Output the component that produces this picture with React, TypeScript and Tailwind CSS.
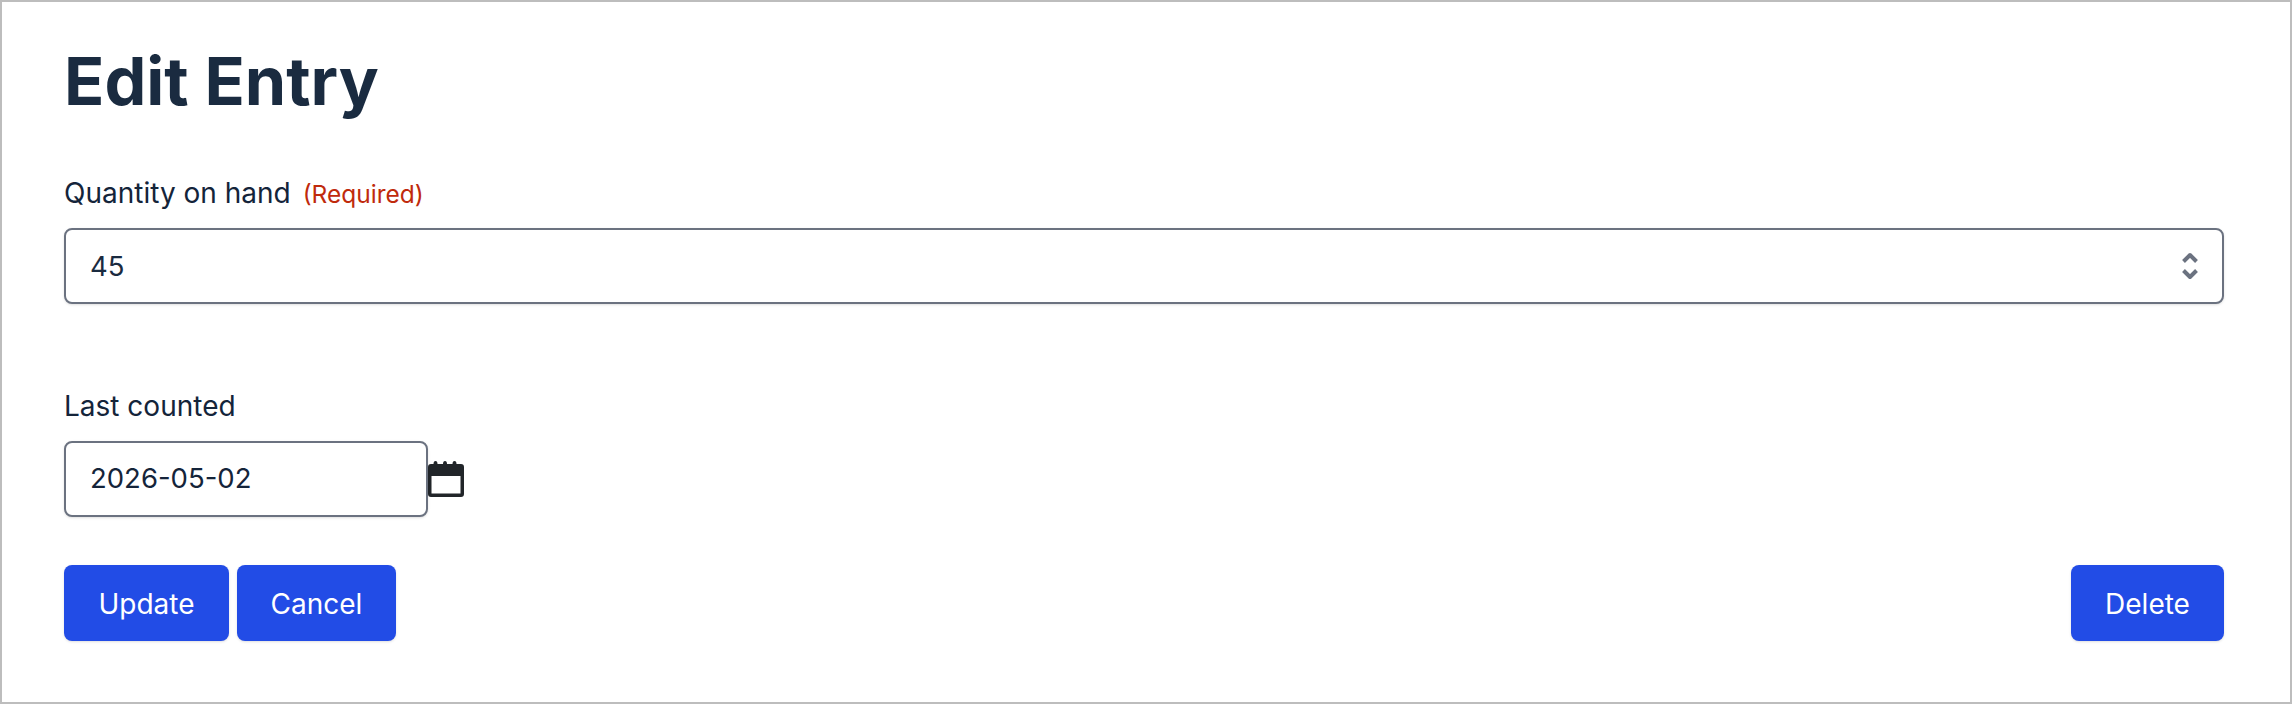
const FONT = "font-['Inter',sans-serif]";

function CalendarIcon() {
  return (
    <svg width="36" height="36" viewBox="0 0 36 36" className="shrink-0" aria-hidden="true">
      <path
        fill="#212529"
        fillRule="evenodd"
        d="M3 3h2.500a2 3 0 0 1 4 0h5.500a2 3 0 0 1 4 0h5.500a2 3 0 0 1 4 0H33a3 3 0 0 1 3 3v27a3 3 0 0 1-3 3H3a3 3 0 0 1-3-3V6a3 3 0 0 1 3-3zM3.500 15v17.500h29V15z"
      />
    </svg>
  );
}

function StepperIcon() {
  return (
    <svg width="16" height="28" viewBox="0 0 16 28" fill="none" stroke="#6b7280" strokeWidth="4" aria-hidden="true">
      <path d="M1.500 9.500L8 3l6.500 6.500" strokeLinejoin="round" />
      <path d="M1.500 18.500L8 25l6.500-6.500" strokeLinejoin="round" />
    </svg>
  );
}

function Action({ label, className }: { label: string; className: string }) {
  return (
    <button className={`h-[76px] rounded-lg bg-[#224ce6] pt-[2px] text-[28px] leading-none text-white shadow-sm ${className}`}>
      {label}
    </button>
  );
}

export default function App() {
  return (
    <div className={`${FONT} h-[704px] w-[2292px] border-2 border-[#bdbdbd] bg-white pl-[62px] pr-[66px] text-[#1a2b40]`}>
      <h1 className="pt-[37px] text-[66.500px] font-bold leading-[84px] text-[#1a2b40]">Edit Entry</h1>

      <div className="mt-[52px] flex items-baseline text-[28px] leading-[36px]">
        <span className="text-[#14243a]">Quantity on hand</span>
        <span className="ml-[12px] text-[24.500px] text-[#c02a0c]">(Required)</span>
      </div>
      <div className="mt-[16px] flex h-[76px] items-center justify-between rounded-lg border-2 border-[#6b7280] bg-white px-[24px] text-[27.500px] shadow-sm">
        <span className="pt-[2px]">45</span>
        <StepperIcon />
      </div>

      <div className="mt-[84px] text-[28px] leading-[36px] text-[#14243a]">Last counted</div>
      <div className="mt-[17px] flex items-center">
        <div className="flex h-[76px] w-[364px] items-center rounded-lg border-2 border-[#6b7280] bg-white pl-[24px] text-[27.500px] text-[#14243a] shadow-sm">
          2026-05-02
        </div>
        <CalendarIcon />
      </div>

      <div className="mt-[48px] flex justify-between">
        <div className="flex gap-2">
          <Action label="Update" className="w-[165px]" />
          <Action label="Cancel" className="w-[159px]" />
        </div>
        <Action label="Delete" className="w-[153px]" />
      </div>
    </div>
  );
}
